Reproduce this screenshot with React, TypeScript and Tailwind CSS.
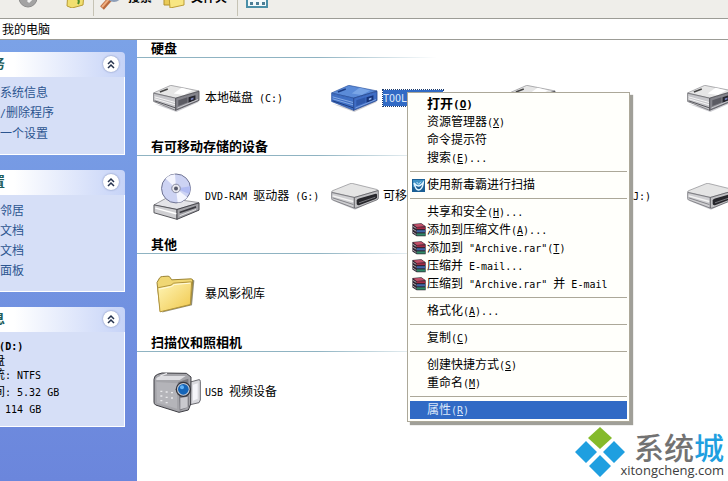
import React from 'react';
import { clsx } from 'clsx';

const FONT = 'font-["Liberation_Sans","Noto_Sans_CJK_SC",sans-serif]';

// Latin runs are half the width of a Chinese character
const Mixed = ({ text }: { text: string }) => (
  <>
    {text.split(/([\x20-\x7e]+)/).map((part, i) =>
      i % 2 === 1 ? (
        <span key={i} className='whitespace-pre font-["DejaVu_Sans_Mono",monospace] text-[10px]'>{part}</span>
      ) : (
        part
      )
    )}
  </>
);

const DriveIcon = ({ selected }: { selected?: boolean }) => (
  <svg viewBox="0 0 141 82" className="h-[27px] w-[47px]" aria-hidden="true">
    <path d="M4 58 70 82 138 52 130 46 60 70Z" fill="#b9b9c0" opacity=".7" />
    <path d="M1 24 53 1 139 18 68 40Z" fill={selected ? '#5b8bd8' : '#e6e6e6'} stroke={selected ? '#27509c' : '#88888c'} strokeWidth="2" />
    <path d="M62 26 86 8 118 17 92 30Z" fill={selected ? '#79a5e6' : '#fff'} />
    <path d="M20 21 44 12" stroke={selected ? '#1c3d85' : '#444'} strokeWidth="5" />
    <path d="M1 25 68 40V77L1 50Z" fill={selected ? '#3f6fc4' : '#c6c6ca'} stroke={selected ? '#234b98' : '#57575c'} strokeWidth="2" />
    <path d="M4 36 66 53M4 42 66 60" stroke={selected ? '#86abe6' : '#f6f6f6'} strokeWidth="3" />
    <path d="M4 48 66 69" stroke={selected ? '#1d3d80' : '#55555a'} strokeWidth="3" />
    <path d="M68 40 139 19V47L68 77Z" fill={selected ? '#3f6dc4' : '#85858c'} stroke={selected ? '#1b3b82' : '#3a3a40'} strokeWidth="2" />
    <path d="M76 46 104 37V53L76 64Z" fill={selected ? '#2f58aa' : '#5b5b63'} />
    <path d="M107 37 128 31V46L107 54Z" fill={selected ? '#15337a' : '#26262e'} />
    <path d="M114 41 122 38V43L114 46Z" fill={selected ? '#8db2ee' : '#7b86c4'} />
    <path d="M73 70 136 44" stroke={selected ? '#7ca0e0' : '#c9c9ce'} strokeWidth="3" />
  </svg>
);

const RemovableIcon = () => (
  <svg viewBox="0 0 144 80" className="h-[27px] w-[48px]" aria-hidden="true">
    <path d="M4 52 72 80 142 46 130 40 60 66Z" fill="#b9b9c0" opacity=".7" />
    <path d="M2 27Q1 24 6 22L56 2Q60 0 65 1L138 19Q143 21 139 23L76 41Q71 43 66 42Z" fill="#e4e4e4" stroke="#88888c" strokeWidth="2" />
    <path d="M2 28 70 43V75L4 50Q2 49 2 46Z" fill="#cfcfd2" stroke="#5a5a60" strokeWidth="2" />
    <path d="M5 38 67 55" stroke="#f4f4f4" strokeWidth="4" />
    <path d="M5 44 67 64" stroke="#85858a" strokeWidth="3" />
    <path d="M70 43 142 22V44Q142 48 138 50L78 74Q73 76 70 74Z" fill="#c1c1c4" stroke="#45454b" strokeWidth="2" />
    <path d="M77 52Q78 48 84 46L134 32Q138 31 138 35V42Q137 46 132 48L84 66Q77 67 77 62Z" fill="#26262b" />
    <path d="M84 59 133 42" stroke="#77777c" strokeWidth="3" />
  </svg>
);

const DvdIcon = () => (
  <svg viewBox="0 0 141 143" className="h-[47px] w-[47px]" aria-hidden="true">
    <path d="M2 97 40 76 139 90 72 111Z" fill="#e4e4e8" stroke="#6d6d72" strokeWidth="2" />
    <path d="M2 97 72 111V141L2 121Z" fill="#cfcfd2" stroke="#55555a" strokeWidth="3" />
    <path d="M72 111 139 91V113L72 141Z" fill="#a1a1a6" stroke="#45454b" strokeWidth="3" />
    <path d="M6 107 70 124" stroke="#fff" strokeWidth="4" />
    <path d="M80 120 130 103" stroke="#3a3a40" strokeWidth="5" />
    <path d="M80 130 130 111" stroke="#e6e6e8" strokeWidth="3" />
    <circle cx="69" cy="47" r="44" fill="#cdd3f3" stroke="#6d7190" strokeWidth="3" />
    <path d="M69 47 37 17A44 44 0 0 1 66 4Z" fill="#f4f5fe" />
    <path d="M69 47 103 74A44 44 0 0 1 74 90Z" fill="#f4f5fe" />
    <path d="M69 47 112 40A43 43 0 0 1 109 64Z" fill="#b2bcf2" />
    <circle cx="69" cy="47" r="13" fill="#e8e8ee" stroke="#85889e" strokeWidth="3" />
    <circle cx="69" cy="47" r="6" fill="#55586a" />
  </svg>
);

const FolderIcon = () => (
  <svg viewBox="0 0 141 116" className="h-[39px] w-[47px]" aria-hidden="true">
    <path d="M27 112 117 90 124 16 116 12Z" fill="#6f6a4a" opacity=".75" />
    <path d="M12 22 20 8Q23 4 29 4L45 3Q50 3 52 8L56 14 114 11Q120 11 119 18L112 88 22 108Z" fill="#f0d774" stroke="#9c8434" strokeWidth="3" />
    <path d="M14 38 54 30 62 24 116 20 112 88 21 110Z" fill="url(#folder)" stroke="#b2953c" strokeWidth="3" />
    <path d="M18 42 56 34 64 28 112 24" stroke="#fffbe0" strokeWidth="3" fill="none" />
    <defs>
      <linearGradient id="folder" x1="0" y1="0" x2="1" y2="1">
        <stop offset="0" stopColor="#fff6b8" />
        <stop offset="1" stopColor="#f0c74b" />
      </linearGradient>
    </defs>
  </svg>
);

const CameraIcon = () => (
  <svg viewBox="0 0 144 123" className="h-[41px] w-[48px]" aria-hidden="true">
    <path d="M112 30 138 23Q142 23 142 28V84L138 92 112 98Z" fill="#d9d9de" stroke="#6a6a70" strokeWidth="3" />
    <path d="M120 38 134 34V80L120 86Z" fill="#f5f5fa" />
    <path d="M3 22Q4 10 14 7L27 3 100 4 114 15 113 96 106 114 78 121 8 99Q3 96 3 90Z" fill="#a5a5aa" stroke="#3c3c42" strokeWidth="3" />
    <path d="M8 22Q12 14 22 12L98 12 80 24 12 24Z" fill="#dedee2" />
    <path d="M10 30 72 34V110L12 92Z" fill="#b4b4b9" />
    <path d="M76 30 106 20 108 104 80 116Z" fill="#7a7a81" />
    <path d="M82 78 104 74V106L82 112Z" fill="#c9c9ce" />
    <path d="M22 12 42 4M22 58h6M38 60h6M54 62h6M22 72h6M38 76h6M54 78h6M22 86h6M38 92h6" stroke="#e9e9ec" strokeWidth="4" />
    <circle cx="91" cy="52" r="23" fill="#35353c" />
    <circle cx="91" cy="52" r="19" fill="#c5cbd6" />
    <circle cx="91" cy="52" r="16" fill="#1565b8" />
    <circle cx="87" cy="46" r="6" fill="#62b2f5" />
  </svg>
);

const ArchiveIcon = () => (
  <svg viewBox="0 0 39 39" className="h-3.5 w-3.5" aria-hidden="true">
    <path d="M1 3 26 1 38 9V37H13L1 29Z" fill="#2c2430" />
    <path d="M3 4 26 2 36 9 13 11Z" fill="#c05068" />
    <path d="M13 12h24v5H13Z" fill="#a52a44" />
    <path d="M13 20h24v6H13Z" fill="#3d66a8" />
    <path d="M13 29h24v6H13Z" fill="#2f8a66" />
    <path d="M2 9 12 15M2 17 12 23M2 25 12 32" stroke="#e6d6da" strokeWidth="2" />
  </svg>
);

const ScanIcon = () => (
  <svg viewBox="0 0 39 39" className="h-[13px] w-[13px]" aria-hidden="true">
    <path d="M0 0H39V39H0Z" fill="#1b5f95" />
    <path d="M3 3H36V16L3 24Z" fill="#3f91c4" />
    <path d="M6 12Q10 32 20 33 32 31 34 10 27 20 20 21 12 20 6 12Z" fill="none" stroke="#e2f5ff" strokeWidth="4" />
    <path d="M14 9 20 16 27 8" fill="none" stroke="#bfe5fa" strokeWidth="3" />
  </svg>
);

const Collapse = ({ label }: { label: string }) => (
  <button type="button" aria-label={label} className="flex h-4 w-4 items-center justify-center rounded-full bg-white shadow-[0_0_2px_#6f7fae]">
    <svg viewBox="0 0 10 10" className="h-2.5 w-2.5" fill="none" stroke="#26334f" strokeWidth="1.5" aria-hidden="true">
      <path d="M2 5 5 2 8 5M2 9 5 6 8 9" />
    </svg>
  </button>
);

const Panel = ({ title, children, className }: { title: string; children: React.ReactNode; className?: string }) => (
  <section className="w-[185px] shrink-0">
    <header className="flex h-[25px] items-center justify-between rounded-t bg-linear-to-r from-white from-40% to-[#c6d3f7] pb-0.5 pl-[13px] pr-1.5">
      <h2 className="text-[13px] font-bold text-[#215d5c]">{title}</h2>
      <Collapse label={title} />
    </header>
    <div className={clsx('border border-t-0 border-white bg-[#d6dff7]', className)}>{children}</div>
  </section>
);

const LinkPanel = ({ title, links }: { title: string; links: string[] }) => (
  <Panel title={title} className="pb-2.5 pl-[35px] pt-1.5">
    {links.map((link) => (
      <a key={link} href="#" className="block leading-5 text-[#2c5590]"><Mixed text={link} /></a>
    ))}
  </Panel>
);

type Item = { icon: React.ReactNode; label: string; selected?: boolean };

const sections: { title: string; items: Item[] }[] = [
  {
    title: '硬盘',
    items: [
      { icon: <DriveIcon />, label: '本地磁盘 (C:)' },
      { icon: <DriveIcon selected />, label: 'TOOLS (D:)', selected: true },
      { icon: <DriveIcon />, label: '' },
      { icon: <DriveIcon />, label: '' },
    ],
  },
  {
    title: '有可移动存储的设备',
    items: [
      { icon: <DvdIcon />, label: 'DVD-RAM 驱动器 (G:)' },
      { icon: <RemovableIcon />, label: '可移动磁盘' },
      { icon: <RemovableIcon />, label: '可移动磁盘 (J:)' },
      { icon: <RemovableIcon />, label: '' },
    ],
  },
  { title: '其他', items: [{ icon: <FolderIcon />, label: '暴风影视库' }] },
  { title: '扫描仪和照相机', items: [{ icon: <CameraIcon />, label: 'USB 视频设备' }] },
];

type Entry = { text: string; accessKey?: string; tail?: string; icon?: React.ReactNode; bold?: boolean; active?: boolean };

const menu: Entry[][] = [
  [
    { text: '打开', accessKey: 'O', bold: true },
    { text: '资源管理器', accessKey: 'X' },
    { text: '命令提示符' },
    { text: '搜索', accessKey: 'E', tail: '...' },
  ],
  [{ text: '使用新毒霸进行扫描', icon: <ScanIcon /> }],
  [
    { text: '共享和安全', accessKey: 'H', tail: '...' },
    { text: '添加到压缩文件', accessKey: 'A', tail: '...', icon: <ArchiveIcon /> },
    { text: '添加到 "Archive.rar"', accessKey: 'T', icon: <ArchiveIcon /> },
    { text: '压缩并 E-mail...', icon: <ArchiveIcon /> },
    { text: '压缩到 "Archive.rar" 并 E-mail', icon: <ArchiveIcon /> },
  ],
  [{ text: '格式化', accessKey: 'A', tail: '...' }],
  [{ text: '复制', accessKey: 'C' }],
  [
    { text: '创建快捷方式', accessKey: 'S' },
    { text: '重命名', accessKey: 'M' },
  ],
  [{ text: '属性', accessKey: 'R', active: true }],
];

const ContextMenu = () => (
  <div role="menu" className="absolute left-[407px] top-[92px] w-[223px] border border-[#aca899] bg-[#fffffb] p-0.5 shadow-[3px_3px_1px_#a09f98]">
    {menu.map((group, i) => (
      <div key={i} role="group" className={clsx(i > 0 && 'mt-1 border-t border-[#aca899] pt-1')}>
        {group.map((entry) => (
          <button
            key={entry.text}
            type="button"
            role="menuitem"
            className={clsx(
              'flex h-[18px] w-full items-center whitespace-nowrap pl-0.5',
              entry.bold && 'text-[13px] font-bold',
              entry.active && 'bg-[#316ac5] text-[#dce8fa]'
            )}
          >
            <span className="w-[15px] shrink-0">{entry.icon}</span>
            <span>
              <Mixed text={entry.text} />
              {entry.accessKey && (
                <span className={clsx('font-["DejaVu_Sans_Mono",monospace]', entry.bold ? 'text-[11px]' : 'text-[10px]')}>
                  (<u>{entry.accessKey}</u>){entry.tail}
                </span>
              )}
            </span>
          </button>
        ))}
      </div>
    ))}
  </div>
);

const Toolbar = () => (
  <div className="flex h-[18px] items-end overflow-hidden bg-[#efeeea]">
    <div className="flex h-10 shrink-0 items-center">
      <button type="button" aria-label="前进" className="ml-[18px]">
        <svg viewBox="0 0 20 20" className="h-5 w-5" aria-hidden="true">
          <circle cx="10" cy="10" r="9" fill="#a3a3a3" stroke="#8c8c8c" />
          <path d="M5 10h8M10 6l4 4-4 4" stroke="#f4f4f4" strokeWidth="3" fill="none" />
        </svg>
      </button>
      <button type="button" aria-label="向上" className="ml-7">
        <svg viewBox="0 0 20 20" className="h-5 w-5" aria-hidden="true">
          <path d="M2 2h14l2 3-1 12-11 3-5-2Z" fill="#f1df70" stroke="#b89b36" />
          <path d="M12 16q2-3-1-6M8 11l3-3 3 3" stroke="#4c8b2b" strokeWidth="2" fill="none" />
        </svg>
      </button>
      <span className="ml-[7px] h-9 w-px bg-[#c6c3b5]" />
      <button type="button" className="ml-1.5 flex items-center gap-1.5 font-bold">
        <svg viewBox="0 0 22 24" className="h-6 w-[22px]" aria-hidden="true">
          <path d="M2 22 10 13" stroke="#b96a3e" strokeWidth="5" />
          <path d="M2 21 9 13" stroke="#efae80" strokeWidth="2" />
          <circle cx="14" cy="8" r="7" fill="#dce9f7" stroke="#8d9eb8" strokeWidth="2" />
        </svg>
        搜索
      </button>
      <button type="button" className="ml-[11px] flex items-center gap-1.5 font-bold">
        <svg viewBox="0 0 22 20" className="h-5 w-[22px]" aria-hidden="true">
          <path d="M1 1h12l2 4v12H1Z" fill="#e9ca58" stroke="#b2912c" />
          <path d="M6 7 21 5V17L7 20Z" fill="#f8e682" stroke="#bc9d36" />
        </svg>
        文件夹
      </button>
      <span className="ml-2.5 h-9 w-px bg-[#c6c3b5]" />
      <button type="button" aria-label="查看" className="ml-2">
        <svg viewBox="0 0 22 20" className="h-5 w-[22px]" aria-hidden="true">
          <path d="M1 1H21V19H1Z" fill="#f2f9fb" stroke="#4a8fa8" strokeWidth="2" />
          <path d="M2 3H20" stroke="#3f86c4" strokeWidth="3" />
          <path d="M4 8h3v2H4ZM10 8h3v2h-3ZM16 8h3v2h-3ZM4 14h3v3H4ZM10 14h3v3h-3ZM16 14h3v3h-3Z" fill="#4c7e96" />
        </svg>
      </button>
    </div>
  </div>
);

const Watermark = () => (
  <div className="absolute right-1 top-[426px] flex items-start">
    <svg viewBox="0 0 52 52" className="h-[52px] w-[52px] shrink-0" aria-hidden="true">
      <path d="M26 1 38 12 26 23 14 12Z" fill="#84ba2b" />
      <path d="M12 15 23 26 12 37 1 26ZM40 15 51 26 40 37 29 26ZM26 29 37 40 26 51 15 40Z" fill="#1f9fe0" />
    </svg>
    <div className="-ml-1.5 flex flex-col items-end whitespace-nowrap pt-1">
      <p className='font-["Noto_Sans_CJK_SC",sans-serif] text-[30px] font-medium leading-8 text-[#727272]'>
        系统<span className="text-[#1f9fe0]">城</span>
      </p>
      <p className='font-["Open_Sans",sans-serif] text-[13px] leading-4 text-[#3d3d3d]'>xitongcheng.com</p>
    </div>
  </div>
);

export default function App() {
  return (
    <div className={clsx('relative flex min-h-screen flex-col overflow-hidden bg-white text-xs text-black', FONT)}>
      <Toolbar />
      <div className="flex h-[22px] items-center border-y border-[#9c9c96] pt-0.5">
        <input aria-label="地址" defaultValue="我的电脑" className="w-full bg-white pl-0.5 outline-none" />
      </div>
      <div className="flex flex-1">
        <aside className="flex w-[137px] shrink-0 flex-col items-end gap-[15px] overflow-hidden bg-linear-to-b from-[#7ba2e7] to-[#6b86dc] pr-3 pt-3">
          <LinkPanel title="系统任务" links={['查看系统信息', '添加/删除程序', '更改一个设置']} />
          <LinkPanel title="其他位置" links={['网上邻居', '我的文档', '共享文档', '控制面板']} />
          <Panel title="详细信息" className="pb-2 pl-4 pt-1.5 leading-[17px]">
            <p className="pl-1.5 font-bold"><Mixed text="TOOLS (D:)" /></p>
            <p className="leading-3">本地磁盘</p>
            <p><Mixed text="文件系统: NTFS" /></p>
            <p><Mixed text="可用空间: 5.32 GB" /></p>
            <p><Mixed text="总大小: 114 GB" /></p>
          </Panel>
        </aside>
        <main className="min-w-0 flex-1 overflow-hidden">
          {sections.map(({ title, items }) => (
            <section key={title}>
              <h2 className="h-[17px] pl-3.5 text-[13px] font-bold leading-[17px]">{title}</h2>
              <div className="h-px w-[300px] bg-linear-to-r from-[#8fb3c2] from-60% to-white" />
              <ul className="flex h-20 items-center pl-4">
                {items.map(({ icon, label, selected }, i) => (
                  <li key={i} className="flex w-[178px] shrink-0 items-center gap-1 whitespace-nowrap">
                    <span className="w-12 shrink-0">{icon}</span>
                    <span className={clsx(selected && 'bg-[#316ac5] text-[#dce8fa] outline-1 outline-dotted outline-[#1d3d70]')}>
                      <Mixed text={label} />
                    </span>
                  </li>
                ))}
              </ul>
            </section>
          ))}
        </main>
      </div>
      <ContextMenu />
      <Watermark />
    </div>
  );
}
